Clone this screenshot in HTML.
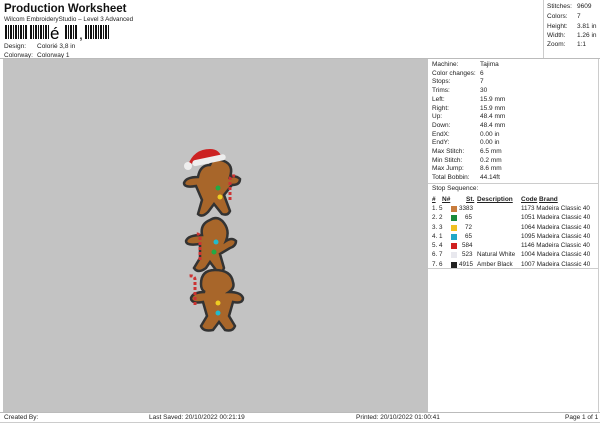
<!DOCTYPE html><html><head><style>
body{margin:0;width:600px;height:424px;background:#fff;font-family:"Liberation Sans",sans-serif;position:relative;overflow:hidden;color:#222}
.a{position:absolute;white-space:nowrap;font-size:6.5px;line-height:9px}
</style></head><body>
<div class="a" style="left:4px;top:2px;font-size:11.5px;line-height:14px;font-weight:bold;color:#111">Production Worksheet</div>
<div class="a" style="left:4px;top:15px;font-size:6.3px">Wilcom EmbroideryStudio – Level 3 Advanced</div>
<svg style="position:absolute;left:5px;top:25px" width="110" height="16">
<g fill="#111">
<rect x="0" y="0" width="2" height="14"/><rect x="3" y="0" width="1" height="14"/><rect x="5" y="0" width="2" height="14"/><rect x="8" y="0" width="1" height="14"/><rect x="10" y="0" width="2" height="14"/><rect x="13" y="0" width="1" height="14"/><rect x="15" y="0" width="2" height="14"/><rect x="18" y="0" width="1" height="14"/><rect x="20" y="0" width="2" height="14"/>
<rect x="25" y="0" width="2" height="14"/><rect x="28" y="0" width="1" height="14"/><rect x="30" y="0" width="2" height="14"/><rect x="33" y="0" width="1" height="14"/><rect x="35" y="0" width="2" height="14"/><rect x="38" y="0" width="1" height="14"/><rect x="40" y="0" width="2" height="14"/><rect x="43" y="0" width="1" height="14"/>
<rect x="60" y="0" width="2" height="14"/><rect x="63" y="0" width="1" height="14"/><rect x="65" y="0" width="2" height="14"/><rect x="68" y="0" width="1" height="14"/><rect x="70" y="0" width="2" height="14"/>
<rect x="80" y="0" width="2" height="14"/><rect x="83" y="0" width="1" height="14"/><rect x="85" y="0" width="2" height="14"/><rect x="88" y="0" width="1" height="14"/><rect x="90" y="0" width="2" height="14"/><rect x="93" y="0" width="1" height="14"/><rect x="95" y="0" width="2" height="14"/><rect x="98" y="0" width="1" height="14"/><rect x="100" y="0" width="2" height="14"/><rect x="103" y="0" width="1" height="14"/>
</g>
<text x="45" y="14" font-size="17" font-family="Liberation Sans">é</text>
<text x="74" y="14" font-size="14" font-family="Liberation Sans">,</text>
</svg>
<div class="a" style="left:4px;top:42px">Design:</div><div class="a" style="left:37px;top:42px">Colorié 3,8 in</div>
<div class="a" style="left:4px;top:51px">Colorway:</div><div class="a" style="left:37px;top:51px">Colorway 1</div>
<div style="position:absolute;left:543px;top:0;width:1px;height:58px;background:#ccc"></div>
<div class="a" style="left:547px;top:2px">Stitches:</div><div class="a" style="left:577px;top:2px">9609</div>
<div class="a" style="left:547px;top:12px">Colors:</div><div class="a" style="left:577px;top:12px">7</div>
<div class="a" style="left:547px;top:22px">Height:</div><div class="a" style="left:577px;top:22px">3.81 in</div>
<div class="a" style="left:547px;top:31px">Width:</div><div class="a" style="left:577px;top:31px">1.26 in</div>
<div class="a" style="left:547px;top:40px">Zoom:</div><div class="a" style="left:577px;top:40px">1:1</div>
<div style="position:absolute;left:0;top:58px;width:600px;height:1px;background:#bbb"></div>
<div style="position:absolute;left:3px;top:59px;width:425px;height:354px;background:#c3c3c3"></div>
<div style="position:absolute;left:598px;top:59px;width:1px;height:353px;background:#ccc"></div>
<div style="position:absolute;left:428px;top:183px;width:170px;height:1px;background:#ccc"></div>
<div style="position:absolute;left:428px;top:268px;width:170px;height:1px;background:#ccc"></div>
<div style="position:absolute;left:0;top:412px;width:600px;height:1px;background:#bbb"></div>
<div style="position:absolute;left:0;top:422px;width:600px;height:1px;background:#ccc"></div>
<svg style="position:absolute;left:170px;top:140px" width="90" height="200" viewBox="0 0 90 200">
<g stroke="#333" stroke-width="2.5" fill="#a8662a">
<path d="M40 25 q-10 0 -12 12 q-12 0 -14 6 q0 5 12 3 l6 14 l-4 14 q4 4 10 -2 l6 -8 l8 10 q6 2 8-3 l-6-16 l8-10 q8 0 8-6 q-4-4-10-2 q4-12-6-16 q-8-3-12 0z"/>
<path d="M40 80 q-10 4-8 15 q-14 0-16 6 q0 5 14 3 l0 14 l-6 10 q4 6 12 0 l4-6 l6 8 q6 4 8-2 l-4-14 l10-6 q6-2 6-7 q-4-4-10 0 q4-10-2-18 q-6-8-14-3z"/>
<path d="M45 130 q-14 0-14 14 q0 6 4 8 q-12 0-14 6 q0 6 12 4 l4 14 l-6 10 q2 6 12 4 l6-8 l6 8 q8 2 10-4 l-6-10 l4-14 q10 2 10-4 q-2-6-14-6 q6-4 4-10 q-2-12-18-12z"/>
</g>
<path d="M18 25 q6-16 22-16 q10 0 12 10 q-16-2-34 6z" fill="#c22"/>
<rect x="22" y="17" width="34" height="6" rx="3" fill="#eee" transform="rotate(-12 40 20)"/>
<circle cx="18" cy="26" r="4" fill="#eee"/>
<g stroke="#c33" stroke-width="3" fill="none" stroke-dasharray="3 2"><path d="M60 60 v-20 q0-5 5-4"/><path d="M30 120 v-22 q0-5-5-4"/><path d="M25 165 v-25 q0-5-6-4"/></g>
<circle cx="48" cy="48" r="2.5" fill="#2a4"/><circle cx="50" cy="57" r="2.5" fill="#ec2"/>
<circle cx="46" cy="102" r="2.5" fill="#2bc"/><circle cx="44" cy="112" r="2.5" fill="#2a4"/>
<circle cx="48" cy="163" r="2.5" fill="#ec2"/><circle cx="48" cy="173" r="2.5" fill="#2bc"/>
</svg>
<div style="position:absolute;left:432px;top:61px">
<div class="a" style="top:0;left:0;line-height:8.7px">Machine:<br>Color changes:<br>Stops:<br>Trims:<br>Left:<br>Right:<br>Up:<br>Down:<br>EndX:<br>EndY:<br>Max Stitch:<br>Min Stitch:<br>Max Jump:<br>Total Bobbin:</div>
<div class="a" style="top:0;left:48px;line-height:8.7px">Tajima<br>6<br>7<br>30<br>15.9 mm<br>15.9 mm<br>48.4 mm<br>48.4 mm<br>0.00 in<br>0.00 in<br>6.5 mm<br>0.2 mm<br>8.6 mm<br>44.14ft</div>
</div>
<div class="a" style="left:432px;top:184px">Stop Sequence:</div>
<div class="a" style="left:432px;top:195px;font-weight:bold;text-decoration:underline">#</div>
<div class="a" style="left:442px;top:195px;font-weight:bold;text-decoration:underline">N#</div>
<div class="a" style="left:466px;top:195px;font-weight:bold;text-decoration:underline">St.</div>
<div class="a" style="left:477px;top:195px;font-weight:bold;text-decoration:underline">Description</div>
<div class="a" style="left:521px;top:195px;font-weight:bold;text-decoration:underline">Code</div>
<div class="a" style="left:539px;top:195px;font-weight:bold;text-decoration:underline">Brand</div>
<div style="position:absolute;left:432px;top:204px;width:170px;line-height:9.3px;font-size:6.3px;white-space:nowrap">
<div style="height:9.3px;position:relative"><span style="position:absolute;left:0">1. 5</span><span style="position:absolute;left:19px;top:2px;width:6px;height:6px;background:#c87c3c"></span><span style="position:absolute;left:27px">3383</span><span style="position:absolute;left:89px">1173 Madeira Classic 40</span></div>
<div style="height:9.3px;position:relative"><span style="position:absolute;left:0">2. 2</span><span style="position:absolute;left:19px;top:2px;width:6px;height:6px;background:#1a8a3a"></span><span style="position:absolute;left:33px">65</span><span style="position:absolute;left:89px">1051 Madeira Classic 40</span></div>
<div style="height:9.3px;position:relative"><span style="position:absolute;left:0">3. 3</span><span style="position:absolute;left:19px;top:2px;width:6px;height:6px;background:#f0c020"></span><span style="position:absolute;left:33px">72</span><span style="position:absolute;left:89px">1064 Madeira Classic 40</span></div>
<div style="height:9.3px;position:relative"><span style="position:absolute;left:0">4. 1</span><span style="position:absolute;left:19px;top:2px;width:6px;height:6px;background:#20a8c8"></span><span style="position:absolute;left:33px">65</span><span style="position:absolute;left:89px">1095 Madeira Classic 40</span></div>
<div style="height:9.3px;position:relative"><span style="position:absolute;left:0">5. 4</span><span style="position:absolute;left:19px;top:2px;width:6px;height:6px;background:#d02020"></span><span style="position:absolute;left:30px">584</span><span style="position:absolute;left:89px">1146 Madeira Classic 40</span></div>
<div style="height:9.3px;position:relative"><span style="position:absolute;left:0">6. 7</span><span style="position:absolute;left:19px;top:2px;width:6px;height:6px;background:#e8e8ee"></span><span style="position:absolute;left:30px">523</span><span style="position:absolute;left:45px">Natural White</span><span style="position:absolute;left:89px">1004 Madeira Classic 40</span></div>
<div style="height:9.3px;position:relative"><span style="position:absolute;left:0">7. 6</span><span style="position:absolute;left:19px;top:2px;width:6px;height:6px;background:#222"></span><span style="position:absolute;left:27px">4915</span><span style="position:absolute;left:45px">Amber Black</span><span style="position:absolute;left:89px">1007 Madeira Classic 40</span></div>
</div>
<div class="a" style="left:4px;top:413px;font-size:6.5px">Created By:</div>
<div class="a" style="left:149px;top:413px;font-size:6.5px">Last Saved: 20/10/2022 00:21:19</div>
<div class="a" style="left:356px;top:413px;font-size:6.5px">Printed: 20/10/2022 01:00:41</div>
<div class="a" style="left:565px;top:413px;font-size:6.5px">Page 1 of 1</div>
</body></html>
